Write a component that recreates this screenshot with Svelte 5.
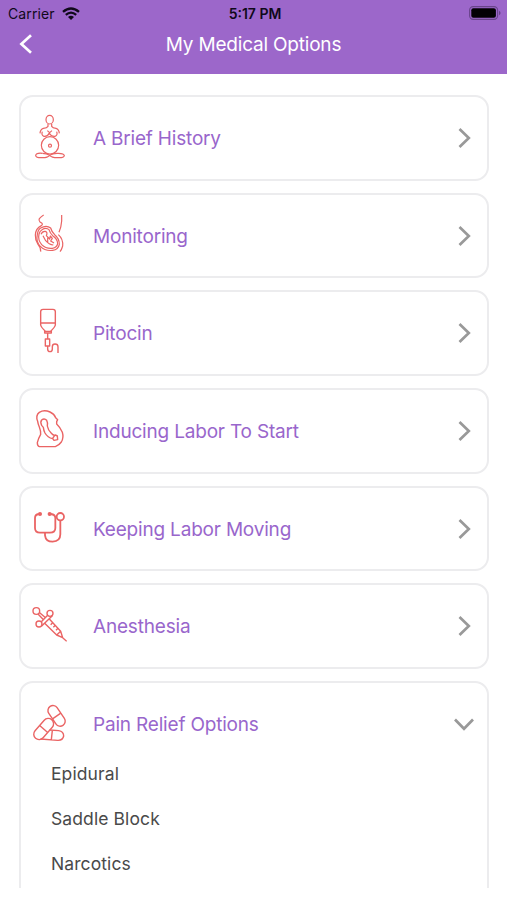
<script>
	let options = $state([
		{ title: 'A Brief History', icon: 'history', top: 60 },
		{ title: 'Monitoring', icon: 'monitoring', top: 59 },
		{ title: 'Pitocin', icon: 'drip', top: 58 },
		{ title: 'Inducing Labor To Start', icon: 'inducing', top: 57 },
		{ title: 'Keeping Labor Moving', icon: 'stethoscope', top: 58 },
		{ title: 'Anesthesia', icon: 'syringe', top: 55 },
		{
			title: 'Pain Relief Options',
			icon: 'pills',
			top: 54,
			open: true,
			items: ['Epidural', 'Saddle Block', 'Narcotics']
		}
	]);
</script>

<div class="screen">
	<header>
		<div class="status">
			<div class="carrier">
				<span>Carrier</span>
				<svg width="18" height="13" viewBox="0 0 18 13">
					<g fill="none" stroke="#10091a" stroke-width="2.3">
						<path d="M1 4.9Q9-2 17 4.9" />
						<path d="M3.8 7.8Q9 3.4 14.2 7.8" />
					</g>
					<path d="M6 9.9Q9 7.4 12 9.9L9 12.9Z" fill="#10091a" />
				</svg>
			</div>
			<div class="time">5:17 PM</div>
			<svg class="battery" width="32" height="14" viewBox="0 0 32 14">
				<rect x=".6" y=".6" width="28" height="12.8" rx="3.6" fill="none" stroke="#69448b" stroke-width="1.1" />
				<rect x="2.3" y="2.3" width="24.6" height="9.4" rx="2" fill="#030104" />
				<path d="M30 4.8Q31.6 5.5 31.6 7T30 9.2Z" fill="#69448b" />
			</svg>
		</div>
		<div class="nav">
			<button class="back" aria-label="Back">
				<svg width="14" height="20" viewBox="0 0 14 20">
					<path d="M12 1.2L2.4 10L12 18.8" fill="none" stroke="#fff" stroke-width="2.7" />
				</svg>
			</button>
			<h1>My Medical Options</h1>
		</div>
	</header>

	<main>
		{#each options as option}
			<section class="card" class:open={option.open}>
				<button class="row" onclick={() => (option.open = !option.open)}>
					<svg class="icon {option.icon}" viewBox="36 {option.top} 120 150">
						{#if option.icon === 'history'}
							<ellipse cx="104" cy="86" rx="11" ry="13" />
							<path d="M99 99V106Q96 111 85 112Q76 115 75 127M110 99V106Q113 111 123 112Q132 115 133 127" />
							<path d="M82 122Q78 133 87 136Q98 137 103 126Q108 137 120 136Q129 133 125 122M97 119L104 125L111 119" />
							<circle cx="105" cy="163" r="26" />
							<circle cx="105" cy="164" r="4.5" />
							<path d="M82 187Q63 185 62 194Q63 201 83 200Q98 200 104 193Q110 200 127 200Q147 201 148 194Q147 186 126 187" />
							<path d="M82 187Q95 187 104 193Q113 187 126 187" />
						{:else if option.icon === 'monitoring'}
							<path d="M86 80Q79 84 73 91Q70 96 75 101L81 105Q84 108 79 112Q62 120 61 140Q60 154 69 168Q78 178 77 190" />
							<path d="M140 80V98Q139 115 132 132M130 139Q145 152 143 173Q140 184 135 190" />
							<path d="M77 119Q94 109 107 119Q109 128 119 139Q133 150 133 168Q130 184 113 186Q91 189 76 174Q62 160 67 138Q69 124 77 119Z" />
							<path d="M81 124Q93 116 102 124Q105 134 113 142Q128 152 128 166Q126 178 112 180Q93 182 80 169Q68 155 72 137Q74 128 81 124Z" />
							<path d="M78 138Q82 128 91 129Q99 132 94 142L104 152L106 143L112 150L107 158L117 164M84 142L92 157Q102 169 115 170M98 148V162" />
						{:else if option.icon === 'drip'}
							<path d="M77 75Q77 68 84 68H114Q121 68 121 75V115Q120 121 107 134H91Q78 121 77 115ZM77 109H121M89 134H109V139H89ZM98 140V157M91 157H104V178H91ZM98 179V187Q98 195 105 195Q112 195 112 187V180Q112 172 120 172Q129 172 129 180V199" />
						{:else if option.icon === 'inducing'}
							<path d="M68 109Q61 91 73 82Q87 73 105 81Q118 87 122 98L128 104L125 110V117Q135 126 142 142Q147 158 139 171Q132 181 121 185H73Q67 183 67 173Q70 160 77 148Q78 139 73 126Q69 117 68 109Z" />
							<path d="M80 121Q75 111 80 105Q88 98 95 106Q99 113 97 123Q99 135 109 145Q116 153 121 150L127 153L128 164L117 166L113 161Q98 158 90 144Q86 136 85 127Z" />
							<path d="M113 160L119 151" />
						{:else if option.icon === 'stethoscope'}
							<path d="M71 94Q60 96 60 106V136Q60 150 75 150H105Q121 150 121 136V106Q121 96 108 94" />
							<path d="M90 151V158Q92 177 113 177Q136 176 136 155V115" />
							<circle cx="136" cy="102" r="11" />
							<circle class="solid" cx="75" cy="94" r="3.5" />
							<circle class="solid" cx="104" cy="94" r="3.5" />
						{:else if option.icon === 'syringe'}
							<circle cx="64" cy="91" r="10" />
							<circle cx="105" cy="98" r="9" />
							<circle cx="72" cy="130" r="9" />
							<path d="M69 100L84 116M74 96L90 110M98 104L79 123M112 105L80 136" />
							<path d="M89 128L125 163L143 171L137 152L103 115M125 163L137 152M143 171L155 182" />
							<path d="M113 126L107 132M121 134L115 140M129 143L123 149" />
						{:else}
							<g transform="rotate(56 125 111)">
								<rect x="90" y="96" width="69" height="30" rx="15" />
								<path d="M125 96V126" />
							</g>
							<g transform="rotate(-49 86 150)">
								<rect x="49" y="134" width="74" height="32" rx="16" />
								<path d="M86 134V166" />
							</g>
							<path d="M104 153L131 155Q146 158 146 171Q143 185 128 184L77 180M112 154L109 182" />
						{/if}
					</svg>
					<span class="title">{option.title}</span>
					<svg class="chevron" width="22" height="22" viewBox="0 0 22 22">
						<path d="M6.5 2L15.8 11L6.5 20" />
					</svg>
				</button>
				{#if option.open && option.items}
					<ul>
						{#each option.items as item}
							<li>{item}</li>
						{/each}
					</ul>
				{/if}
			</section>
		{/each}
	</main>
</div>

<style>
	:global(body) {
		margin: 0;
		background: #fff;
	}

	.screen {
		display: flex;
		flex-direction: column;
		box-sizing: border-box;
		height: 900px;
		padding-bottom: 12px;
		overflow: hidden;
		font-family: Inter, 'Liberation Sans', sans-serif;
		background: #fff;
	}

	header {
		flex: none;
		height: 74px;
		background: #9c67ca;
	}

	.status {
		display: grid;
		grid-template-columns: 1fr auto 1fr;
		align-items: center;
		height: 27px;
		padding: 0 6px 0 8px;
		font-size: 14px;
		color: #10091a;
	}

	.carrier {
		display: flex;
		align-items: center;
		gap: 7px;
		letter-spacing: 0.1px;
	}

	.time {
		padding-left: 1px;
		font-size: 14px;
		font-weight: 600;
	}

	.battery {
		justify-self: end;
		margin-bottom: 1px;
	}

	.nav {
		display: grid;
		grid-template-columns: 60px 1fr 60px;
		align-items: center;
		height: 34px;
	}

	button {
		padding: 0;
		border: 0;
		background: none;
		font: inherit;
		cursor: pointer;
	}

	.back {
		display: flex;
		padding-left: 19px;
	}

	h1 {
		margin: 0;
		font-size: 19px;
		font-weight: 400;
		letter-spacing: -0.2px;
		text-align: center;
		color: #fff;
	}

	main {
		flex: 1;
		display: flex;
		flex-direction: column;
		gap: 12px;
		min-height: 0;
		padding: 21px 18.5px 0 19px;
		overflow: hidden;
	}

	.card {
		flex: none;
		box-sizing: border-box;
		height: 85.7px;
		border: 2px solid #ececee;
		border-radius: 14px;
		background: #fff;
	}

	.card.open {
		height: 260px;
	}

	.row {
		display: flex;
		align-items: center;
		width: 100%;
		height: 82px;
		padding: 0 12px 0 6px;
		text-align: left;
	}

	.icon {
		flex: none;
		width: 40px;
		height: 50px;
		margin-bottom: 4.5px;
		fill: none;
		stroke: #ea6464;
		stroke-width: 4.2;
		stroke-linejoin: round;
	}

	.history,
	.monitoring {
		stroke-width: 3.6;
	}

	.stethoscope {
		stroke-width: 5.4;
	}

	.solid {
		fill: #ea6464;
	}

	.title {
		flex: 1;
		margin-left: 26px;
		padding-top: 1px;
		font-size: 19px;
		letter-spacing: -0.19px;
		color: #9966cc;
	}

	.chevron {
		fill: none;
		stroke: #999;
		stroke-width: 2.7;
	}

	.open .chevron {
		transform: rotate(90deg);
	}

	ul {
		margin: 0;
		padding: 0 0 0 30px;
		list-style: none;
	}

	li {
		display: flex;
		align-items: center;
		height: 45.2px;
		font-size: 17.5px;
		letter-spacing: 0.1px;
		color: #4a4a4a;
	}

	li:first-child {
		margin-top: -14.5px;
	}
</style>
